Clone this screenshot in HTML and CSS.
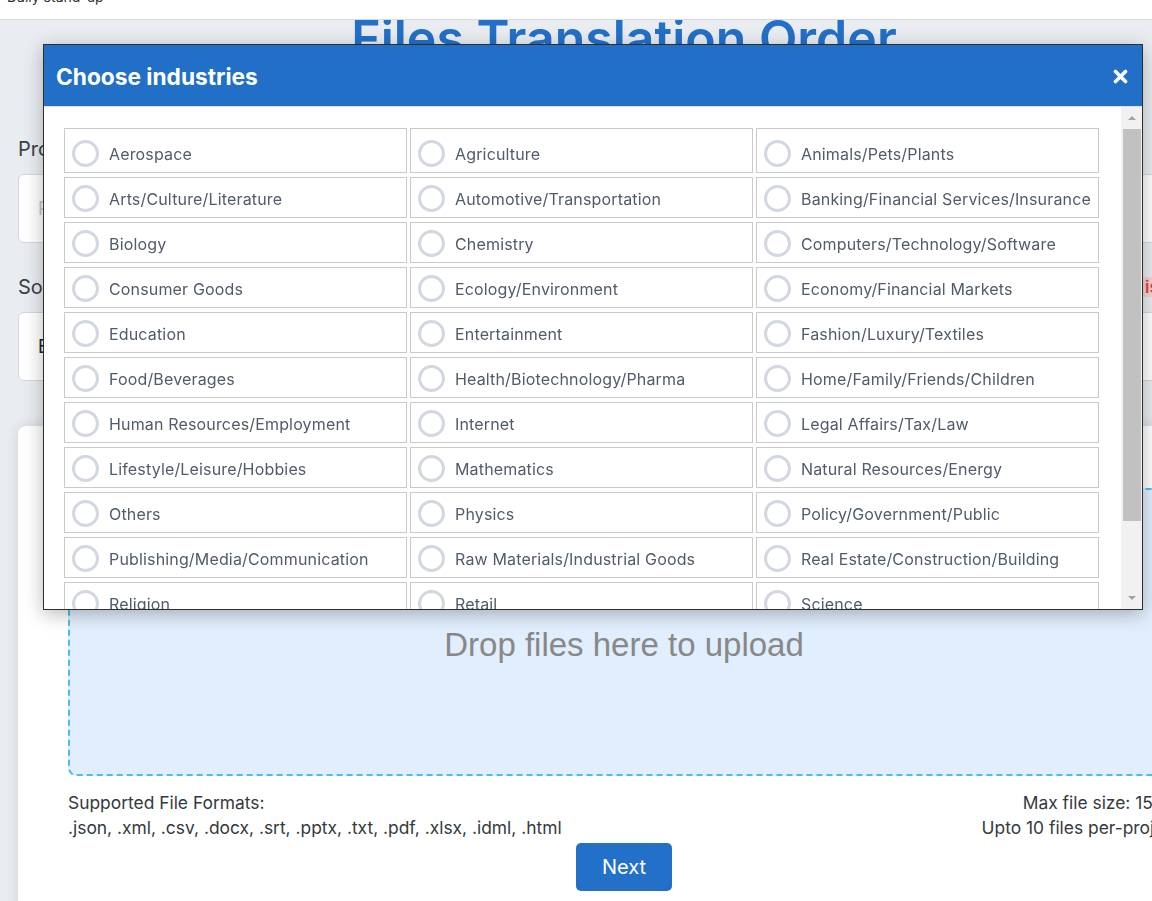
FILE: index.html
```html
<!DOCTYPE html>
<html lang="en">
<head>
<meta charset="utf-8">
<title>Files Translation Order</title>
<link rel="stylesheet" href="styles.css">
</head>
<body>
<div class="topbar"><span class="topbar-text">Daily stand-up</span></div>
<main class="page">
  <h1 class="title">Files Translation Order</h1>
  <div class="field">
    <div class="label-row"><label class="label">Project name</label></div>
    <div class="input placeholder">Project name</div>
  </div>
  <div class="field">
    <div class="label-row"><label class="label">Source language</label><span class="badge">is required</span></div>
    <div class="input">English</div>
  </div>
  <section class="card">
    <div class="dropzone"><span class="dz-text">Drop files here to upload</span></div>
    <div class="info">
      <div>Supported File Formats:<br>.json, .xml, .csv, .docx, .srt, .pptx, .txt, .pdf, .xlsx, .idml, .html</div>
      <div class="info-right">Max file size: 15MB<br>Upto 10 files per-project</div>
    </div>
    <div class="actions"><button class="btn">Next</button></div>
  </section>
</main>

<div class="modal">
  <div class="modal-header">
    <h2 class="modal-title">Choose industries</h2>
    <svg class="close" width="15" height="15" viewBox="0 0 15 15"><path d="M2.5 2.5 L12.5 12.5 M12.5 2.5 L2.5 12.5" stroke="#fff" stroke-width="3.6" stroke-linecap="round" fill="none"/></svg>
  </div>
  <div class="modal-body">
    <div class="list">
      <div class="grid">
        <label class="item first"><span class="radio"></span>Aerospace</label>
        <label class="item first"><span class="radio"></span>Agriculture</label>
        <label class="item first"><span class="radio"></span>Animals/Pets/Plants</label>
        <label class="item"><span class="radio"></span>Arts/Culture/Literature</label>
        <label class="item"><span class="radio"></span>Automotive/Transportation</label>
        <label class="item"><span class="radio"></span>Banking/Financial Services/Insurance</label>
        <label class="item"><span class="radio"></span>Biology</label>
        <label class="item"><span class="radio"></span>Chemistry</label>
        <label class="item"><span class="radio"></span>Computers/Technology/Software</label>
        <label class="item"><span class="radio"></span>Consumer Goods</label>
        <label class="item"><span class="radio"></span>Ecology/Environment</label>
        <label class="item"><span class="radio"></span>Economy/Financial Markets</label>
        <label class="item"><span class="radio"></span>Education</label>
        <label class="item"><span class="radio"></span>Entertainment</label>
        <label class="item"><span class="radio"></span>Fashion/Luxury/Textiles</label>
        <label class="item"><span class="radio"></span>Food/Beverages</label>
        <label class="item"><span class="radio"></span>Health/Biotechnology/Pharma</label>
        <label class="item"><span class="radio"></span>Home/Family/Friends/Children</label>
        <label class="item"><span class="radio"></span>Human Resources/Employment</label>
        <label class="item"><span class="radio"></span>Internet</label>
        <label class="item"><span class="radio"></span>Legal Affairs/Tax/Law</label>
        <label class="item"><span class="radio"></span>Lifestyle/Leisure/Hobbies</label>
        <label class="item"><span class="radio"></span>Mathematics</label>
        <label class="item"><span class="radio"></span>Natural Resources/Energy</label>
        <label class="item"><span class="radio"></span>Others</label>
        <label class="item"><span class="radio"></span>Physics</label>
        <label class="item"><span class="radio"></span>Policy/Government/Public</label>
        <label class="item"><span class="radio"></span>Publishing/Media/Communication</label>
        <label class="item"><span class="radio"></span>Raw Materials/Industrial Goods</label>
        <label class="item"><span class="radio"></span>Real Estate/Construction/Building</label>
        <label class="item"><span class="radio"></span>Religion</label>
        <label class="item"><span class="radio"></span>Retail</label>
        <label class="item"><span class="radio"></span>Science</label>
        <label class="item"><span class="radio"></span>Social Sciences</label>
        <label class="item"><span class="radio"></span>Sports/Fitness/Recreation</label>
        <label class="item"><span class="radio"></span>Telecommunications</label>
      </div>
    </div>
    <div class="scrollbar">
      <div class="sb-btn"><span class="tri-up"></span></div>
      <div class="sb-thumb"></div>
      <div class="sb-space"></div>
      <div class="sb-btn"><span class="tri-down"></span></div>
    </div>
  </div>
</div>
</body>
</html>
```

FILE: styles.css
```css
html, body {
  margin: 0;
  height: 901px;
  overflow: hidden;
}
body {
  background: #e9edf1;
  font-family: Inter, "Noto Sans", sans-serif;
  color: #333;
}

.topbar {
  position: relative;
  z-index: 2;
  height: 19px;
  background: #fff;
  border-bottom: 1px solid #d6dadf;
  padding-left: 7px;
  overflow: hidden;
}
.topbar-text {
  display: block;
  font-size: 14px;
  line-height: 17px;
  margin-top: -12px;
  color: #333;
}

.page {
  width: 1212px;
  margin-left: 18px;
}
.title {
  margin: -7px 0 0;
  font-size: 50px;
  line-height: 50px;
  font-weight: 600;
  color: #2370c8;
  text-align: center;
}

.field {
  margin-top: 71px;
}
.field + .field {
  margin-top: 29px;
}
.label-row {
  display: flex;
  align-items: center;
  justify-content: space-between;
  height: 30px;
  margin-bottom: 10px;
}
.label {
  font-size: 20px;
  line-height: 30px;
  color: #3a3f47;
}
.badge {
  width: 87px;
  height: 20px;
  box-sizing: border-box;
  padding-left: 2px;
  background: #f6d3d0;
  color: #e8434f;
  font-size: 17px;
  font-weight: 600;
  line-height: 20px;
  overflow: hidden;
  white-space: nowrap;
}
.input {
  height: 69px;
  box-sizing: border-box;
  border: 1px solid #d3d7dc;
  border-radius: 6px;
  background: #fff;
  display: flex;
  align-items: center;
  padding-left: 19px;
  font-size: 18px;
  color: #222;
}
.placeholder {
  color: #c4c4c4;
}

.card {
  margin-top: 45px;
  background: #fff;
  border-radius: 8px;
  box-shadow: 0 0 14px rgba(0, 0, 0, 0.12);
  padding: 62px 50px 40px;
}
.dropzone {
  height: 288px;
  box-sizing: border-box;
  border: 2px dashed #4cbde8;
  border-radius: 8px;
  background: #e0eefd;
  display: flex;
  justify-content: center;
  align-items: flex-start;
  padding-top: 136px;
}
.dz-text {
  font-family: "Liberation Sans", Arial, sans-serif;
  font-size: 33px;
  line-height: 38px;
  color: #888;
}
.info {
  display: flex;
  justify-content: space-between;
  margin-top: 14px;
  font-size: 17.4px;
  line-height: 25px;
  color: #343a40;
}
.info-right {
  text-align: right;
}
.actions {
  display: flex;
  justify-content: center;
  margin-top: 3px;
}
.btn {
  height: 48px;
  padding: 0 26px;
  border: none;
  border-radius: 5px;
  background: #2370c8;
  color: #fff;
  font-family: Inter, sans-serif;
  font-size: 20px;
}

/* modal */
.modal {
  position: fixed;
  left: 43px;
  top: 44px;
  width: 1100px;
  height: 566px;
  box-sizing: border-box;
  border: 1px solid #2e2e2e;
  background: #fff;
  box-shadow: 0 4px 18px rgba(0, 0, 0, 0.28);
  display: flex;
  flex-direction: column;
  z-index: 5;
}
.modal-header {
  height: 62px;
  flex: none;
  box-sizing: border-box;
  background: #216fc6;
  border-bottom: 1px solid #dde1e5;
  display: flex;
  align-items: center;
  justify-content: space-between;
  padding: 2px 14px 0 12px;
}
.modal-title {
  margin: 0;
  color: #fff;
  font-size: 22.7px;
  font-weight: 700;
}
.close {
  display: block;
}
.modal-body {
  flex: 1;
  min-height: 0;
  display: flex;
}
.list {
  flex: 1;
  overflow: hidden;
  padding: 21px 0 0 20px;
}
.grid {
  display: grid;
  grid-template-columns: repeat(3, 343px);
  column-gap: 3px;
  row-gap: 4px;
}
.item {
  height: 41px;
  box-sizing: border-box;
  border: 1px solid #cacaca;
  display: flex;
  align-items: center;
  gap: 10px;
  padding: 2px 0 0 7px;
  font-size: 16px;
  letter-spacing: 0.16px;
  color: #515b6a;
  white-space: nowrap;
}
.item.first {
  height: 45px;
  padding-top: 6px;
}
.radio {
  width: 21px;
  height: 21px;
  border: 3px solid #d2d7e2;
  border-radius: 50%;
  flex: none;
}

.scrollbar {
  width: 21px;
  flex: none;
  box-sizing: border-box;
  background: #f1f1f1;
  padding: 0 1px 0 2px;
  display: flex;
  flex-direction: column;
}
.sb-btn {
  height: 22px;
  display: flex;
  align-items: center;
  justify-content: center;
}
.sb-thumb {
  height: 392px;
  background: #c1c1c1;
}
.sb-space {
  flex: 1;
}
.tri-up {
  width: 0;
  height: 0;
  border-left: 4px solid transparent;
  border-right: 4px solid transparent;
  border-bottom: 4px solid #a3a3a3;
}
.tri-down {
  width: 0;
  height: 0;
  border-left: 4px solid transparent;
  border-right: 4px solid transparent;
  border-top: 4px solid #a3a3a3;
}
```
